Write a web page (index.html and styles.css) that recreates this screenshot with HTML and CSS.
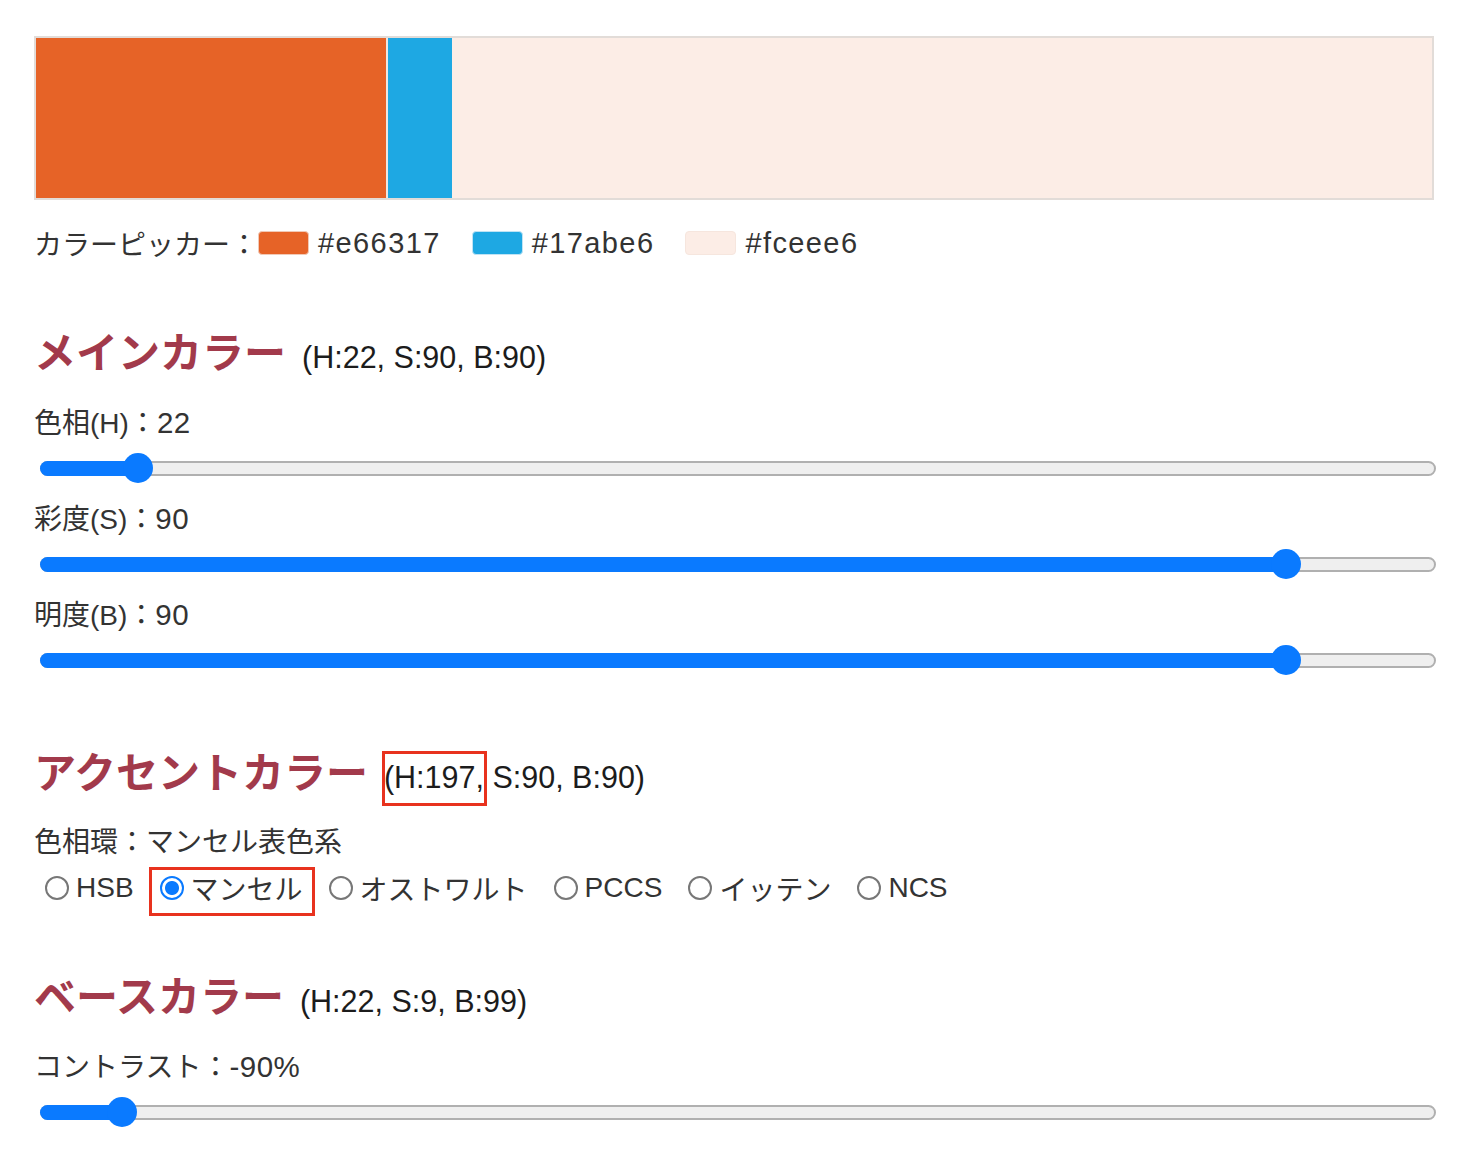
FILE: index.html
```html
<!DOCTYPE html>
<html lang="ja">
<head>
<meta charset="utf-8">
<title>配色</title>
<link rel="stylesheet" href="styles.css">
</head>
<body>
<div class="page">
  <div class="bar">
    <div class="seg seg-main"></div>
    <div class="seg seg-accent"></div>
    <div class="seg seg-base"></div>
  </div>

  <div class="picker">
    <span class="picker-label">カラーピッカー：</span>
    <span class="pick"><span class="swatch sw-main"></span><span class="hex">#e66317</span></span>
    <span class="pick"><span class="swatch sw-accent"></span><span class="hex">#17abe6</span></span>
    <span class="pick"><span class="swatch sw-base"></span><span class="hex">#fceee6</span></span>
  </div>

  <h2 class="heading heading-first">メインカラー<span class="hsb">(H:22, S:90, B:90)</span></h2>

  <div class="label label-after-heading">色相(H)：<span class="num">22</span></div>
  <div class="slider">
    <div class="track"><div class="fill" style="width:98px"></div></div>
    <div class="thumb" style="left:83px"></div>
  </div>

  <div class="label label-next">彩度(S)：<span class="num">90</span></div>
  <div class="slider">
    <div class="track"><div class="fill" style="width:1246px"></div></div>
    <div class="thumb" style="left:1231px"></div>
  </div>

  <div class="label label-next">明度(B)：<span class="num">90</span></div>
  <div class="slider">
    <div class="track"><div class="fill" style="width:1246px"></div></div>
    <div class="thumb" style="left:1231px"></div>
  </div>

  <h2 class="heading heading-accent">アクセントカラー<span class="hsb"><span class="mark mark-h">(H:197,</span> S:90, B:90)</span></h2>

  <div class="label label-after-heading">色相環：マンセル表色系</div>
  <div class="radios">
    <label class="radio"><span class="dot"></span>HSB</label>
    <label class="radio mark mark-r"><span class="dot dot-on"></span>マンセル</label>
    <label class="radio"><span class="dot"></span>オストワルト</label>
    <label class="radio"><span class="dot"></span>PCCS</label>
    <label class="radio"><span class="dot"></span>イッテン</label>
    <label class="radio"><span class="dot"></span>NCS</label>
  </div>

  <h2 class="heading heading-base">ベースカラー<span class="hsb">(H:22, S:9, B:99)</span></h2>

  <div class="label label-after-heading">コントラスト：<span class="num">-90%</span></div>
  <div class="slider">
    <div class="track"><div class="fill" style="width:82px"></div></div>
    <div class="thumb" style="left:67px"></div>
  </div>
</div>
</body>
</html>
```

FILE: styles.css
```css
html, body {
  margin: 0;
  padding: 0;
  background: #ffffff;
}

body {
  font-family: "Liberation Sans", "Noto Sans CJK JP", sans-serif;
  color: #333333;
  font-size: 28px;
}

.page {
  padding: 36px 0 0 34px;
  width: 1400px;
}

/* colour bar */
.bar {
  display: flex;
  height: 164px;
  border: 2px solid #e2dcd8;
  box-sizing: border-box;
}

.seg { height: 100%; }
.seg-main { width: 350px; background: #e66327; border-right: 2px solid #efe6e0; }
.seg-accent { width: 64px; background: #1ea8e3; }
.seg-base { flex: 1; background: #fcede6; }

/* picker row */
.picker {
  display: flex;
  align-items: center;
  height: 40px;
  margin-top: 23px;
  font-family: "Noto Sans CJK JP", sans-serif;
  font-size: 28px;
  color: #333;
}

.pick {
  display: flex;
  align-items: center;
  margin-right: 31px;
}

.swatch {
  width: 51px;
  height: 24px;
  border-radius: 4px;
  box-sizing: border-box;
  margin-right: 9px;
}

.sw-main { background: #e66327; border: 1px solid #f1c9b6; }
.sw-accent { background: #1ea8e3; border: 1px solid #bfe3f4; }
.sw-base { background: #fcede6; border: 1px solid #f6e6de; }

.hex {
  font-family: "Liberation Sans", sans-serif;
  font-size: 29px;
  letter-spacing: 1.4px;
  color: #333;
}

/* headings */
.heading {
  margin: 0;
  height: 56px;
  line-height: 56px;
  font-family: "Noto Sans CJK JP", sans-serif;
  font-weight: 700;
  font-size: 42px;
  color: #a23a4b;
  white-space: nowrap;
}

.heading-first { margin-top: 59px; }
.heading-accent { margin-top: 67px; }
.heading-base { margin-top: 58px; }

.hsb {
  font-family: "Liberation Sans", "Noto Sans CJK JP", sans-serif;
  font-weight: 400;
  font-size: 30.5px;
  color: #1c1c1c;
  margin-left: 16px;
}

/* labels */
.label {
  height: 40px;
  line-height: 40px;
  margin-top: 22px;
  font-size: 28px;
  color: #333;
  white-space: nowrap;
}

.num {
  font-size: 29.5px;
  letter-spacing: 0.5px;
}

.label-after-heading { margin-top: 25px; }
.label-next { margin-top: 16px; }

/* sliders */
.slider {
  position: relative;
  width: 1396px;
  height: 30px;
  margin: 10px 0 0 6px;
  padding-top: 8px;
  box-sizing: border-box;
}

.track {
  position: relative;
  height: 15px;
  border: 2px solid #b0b0b0;
  background: #efefef;
  border-radius: 8px;
  box-sizing: border-box;
}

.fill {
  position: absolute;
  left: -2px;
  top: -2px;
  bottom: -2px;
  background: #0a7aff;
  border-radius: 8px 0 0 8px;
}

.thumb {
  position: absolute;
  top: 0;
  width: 30px;
  height: 30px;
  border-radius: 50%;
  background: #0a7aff;
}

/* radios */
.radios {
  display: flex;
  align-items: center;
  height: 40px;
  margin-top: 5px;
  padding-left: 11px;
  font-size: 28px;
  color: #333;
  white-space: nowrap;
}

.radio {
  display: flex;
  align-items: center;
  margin-right: 26px;
}

.dot {
  width: 24px;
  height: 24px;
  border: 2px solid #777;
  border-radius: 50%;
  box-sizing: border-box;
  margin-right: 7px;
  background: #fff;
}

.dot-on {
  border-color: #0a7aff;
  background: radial-gradient(circle, #0a7aff 0 6.5px, #ffffff 7.5px);
}

/* red annotation boxes */
.mark { position: relative; }

.mark::after {
  content: "";
  position: absolute;
  border: 3px solid #e8321e;
  box-sizing: border-box;
  pointer-events: none;
}

.mark-h::after {
  left: -2px;
  right: -3px;
  top: -9px;
  bottom: -12px;
}

.mark-r::after {
  left: -11px;
  right: -12px;
  top: -1px;
  bottom: -8px;
}
```
